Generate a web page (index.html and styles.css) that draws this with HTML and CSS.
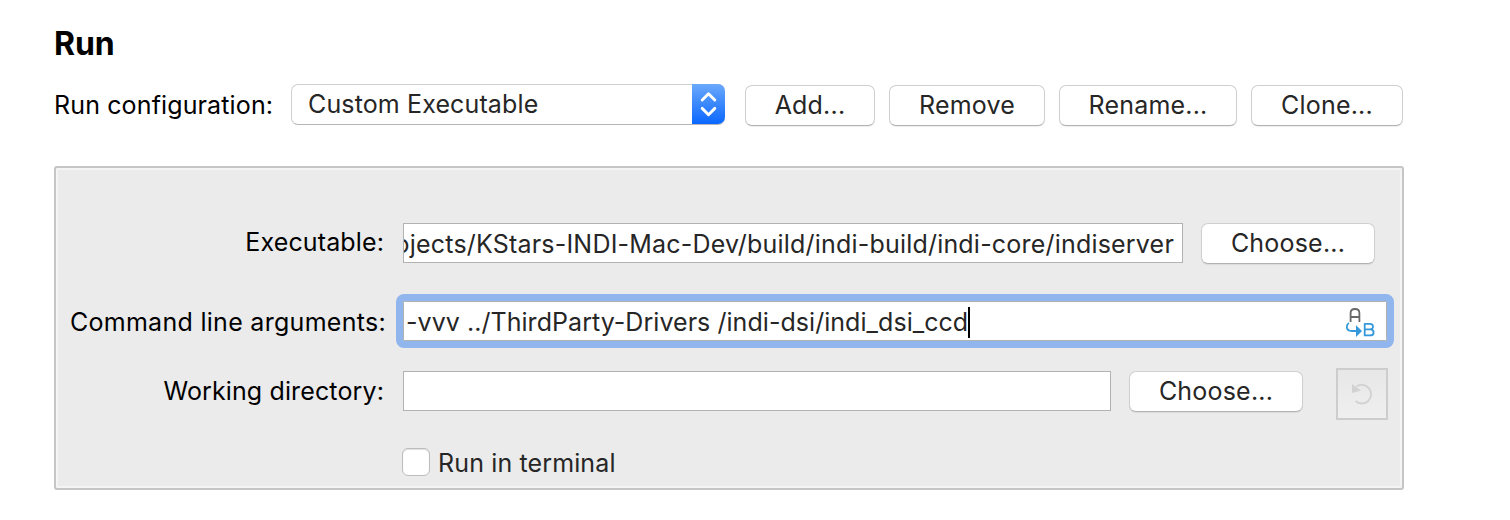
FILE: index.html
```html
<!DOCTYPE html>
<html lang="en">
<head>
<meta charset="utf-8">
<title>Run Settings</title>
<link rel="stylesheet" href="styles.css">
</head>
<body>
<main class="page">
  <h1 class="title">Run</h1>
  <div class="config-row">
    <span class="config-label">Run configuration:</span>
    <div class="select">
      <span class="select-value">Custom Executable</span>
      <span class="select-arrows">
        <svg width="33" height="40" viewBox="0 0 33 40" fill="none" stroke="#fff" stroke-width="2.9" stroke-linecap="round" stroke-linejoin="round"><path d="M10.2 16 16.5 9.7 22.8 16M10.2 24.4 16.5 30.7 22.8 24.4"/></svg>
      </span>
    </div>
    <button class="button add">Add...</button>
    <button class="button remove">Remove</button>
    <button class="button rename">Rename...</button>
    <button class="button clone">Clone...</button>
  </div>

  <section class="panel">
    <div class="row row-executable">
      <span class="label label-executable">Executable:</span>
      <div class="field field-executable"><span class="path">ojects/KStars-INDI-Mac-Dev/build/indi-build/indi-core/indiserver</span></div>
      <button class="button choose">Choose...</button>
    </div>
    <div class="row row-arguments">
      <span class="label label-arguments">Command line arguments:</span>
      <div class="field field-arguments">
        <span class="arguments">-vvv ../ThirdParty-Drivers /indi-dsi/indi_dsi_ccd</span><span class="caret"></span>
        <svg class="variables" width="32" height="32" viewBox="0 0 32 32" fill="none">
          <path d="M6.6 16V7.2Q6.6 3 11 3T15.4 7.2V16M6.6 11H15.4" stroke="#686868" stroke-width="1.8"/>
          <path d="M5 17Q2.8 18.2 2.8 21Q2.8 25 8 25H13" stroke="#3498db" stroke-width="1.8"/>
          <path d="M12 19.2 18 25 12 31Z" fill="#3498db"/>
          <path d="M20.7 17.8H26Q29 17.8 29 20.6T26 23.4H20.7M26 23.4Q29.6 23.4 29.6 26.4T26 29.4H20.7V17.2" stroke="#3498db" stroke-width="1.8"/>
        </svg>
      </div>
    </div>
    <div class="row row-directory">
      <span class="label label-directory">Working directory:</span>
      <div class="field field-directory"></div>
      <button class="button choose">Choose...</button>
      <span class="reset">
        <svg width="48" height="48" viewBox="0 0 48 48" fill="none"><path d="M18.5 16.5A9.3 9.3 0 1 1 17.5 31" stroke="#d2d2d2" stroke-width="2"/><path d="M14 14V23L23 20.5Z" fill="#d2d2d2"/></svg>
      </span>
    </div>
    <div class="check-row">
      <span class="checkbox"></span>
      <span class="check-label">Run in terminal</span>
    </div>
  </section>
</main>
</body>
</html>
```
FILE: styles.css
```css
* { box-sizing: border-box; }
body {
  margin: 0;
  background: #fff;
  color: #000;
  font: 25px/30px Inter, "Liberation Sans", sans-serif;
  letter-spacing: 0.13px;
  white-space: nowrap;
}
.page { width: 1510px; height: 520px; padding: 29px 106px 0 54px; overflow: hidden; }
.title { margin: 0; font-size: 32px; line-height: 30px; font-weight: 700; letter-spacing: -0.1px; }
.config-row { display: flex; margin-top: 25px; height: 41px; }
.config-label { width: 237px; padding-top: 6px; }
.select {
  display: flex;
  width: 434px;
  height: 41px;
  margin-right: 20px;
  border: 1px solid #d0d0d0;
  border-bottom-color: #b5b5b5;
  border-right: 0;
  border-radius: 7px;
  color: #262626;
}
.select-value { flex: 1; padding: 4px 0 0 16px; }
.select-arrows {
  width: 33px;
  height: 40px;
  margin-top: -1px;
  border-radius: 0 7px 7px 0;
  background: linear-gradient(#6ba9fb, #0a67ff);
}
.select-arrows svg { display: block; }
.button {
  height: 41px;
  margin: 1px 0 0;
  padding: 0 0 2px;
  border: 1px solid #cfcfcf;
  border-bottom-color: #b2b2b2;
  border-radius: 7px;
  background: #fff;
  box-shadow: 0 1px 1px rgba(0, 0, 0, .07);
  color: #262626;
  font: inherit;
  letter-spacing: 0.2px;
}
.add { width: 130px; margin-right: 14px; }
.remove { width: 156px; margin-right: 14px; }
.rename { width: 178px; margin-right: 14px; }
.clone { width: 152px; }
.panel {
  height: 324px;
  margin-top: 41px;
  padding: 50px 0 0;
  border: 2px solid #c5c5c5;
  border-radius: 3px;
  background: #ebebeb;
  box-shadow: inset 0 0 0 2px #f4f4f4;
}
.row { display: flex; }
.row-executable { height: 76px; padding-top: 5px; }
.row-arguments { height: 54px; }
.row-directory { height: 77px; padding-top: 22px; }
.label { width: 328px; margin-right: 19px; text-align: right; padding-top: 4px; }
.field { height: 40px; border: 1px solid #b2b2b2; background: #fff; color: #262626; }
.field-executable {
  display: flex;
  justify-content: flex-end;
  width: 780px;
  margin-right: 18px;
  padding: 5px 8px 0 0;
  overflow: hidden;
}
.path { letter-spacing: 0.2px; }
.arguments { letter-spacing: 0.05px; }
.row-executable .button, .row-directory .button { width: 174px; margin-top: 0; }
.label-arguments { width: 330px; margin-right: 10px; padding-top: 13px; letter-spacing: 0.29px; }
.field-arguments {
  display: flex;
  width: 998px;
  height: 54px;
  padding: 6px 18px 0 3px;
  border: 7px solid #91b6ee;
  border-radius: 8px;
  box-shadow: inset 0 0 0 1px #b2b2b2;
}
.caret { width: 2px; height: 31px; background: #000; }
.variables { margin: -1px -7px 0 auto; }
.field-directory { width: 708px; margin-right: 18px; }
.row-directory .field { margin-top: 1px; }
.row-directory .button { margin-top: 1px; }
.row-directory .label { padding-top: 6px; }
.reset {
  width: 52px;
  height: 52px;
  margin: -2px 0 0 33px;
  border: 2px solid #cdcdcd;
  background: linear-gradient(#e7e7e7, #efefef);
}
.reset svg { display: block; }
.check-row { display: flex; align-items: center; height: 30px; padding-left: 346px; margin-top: 22px; }
.checkbox {
  width: 28px;
  height: 28px;
  margin-right: 8px;
  border: 1px solid #bcbcbc;
  border-radius: 6px;
  background: #fff;
  box-shadow: inset 0 1px 1px #e0e0e0;
}
.check-label { padding-top: 2px; color: #262626; }
```
